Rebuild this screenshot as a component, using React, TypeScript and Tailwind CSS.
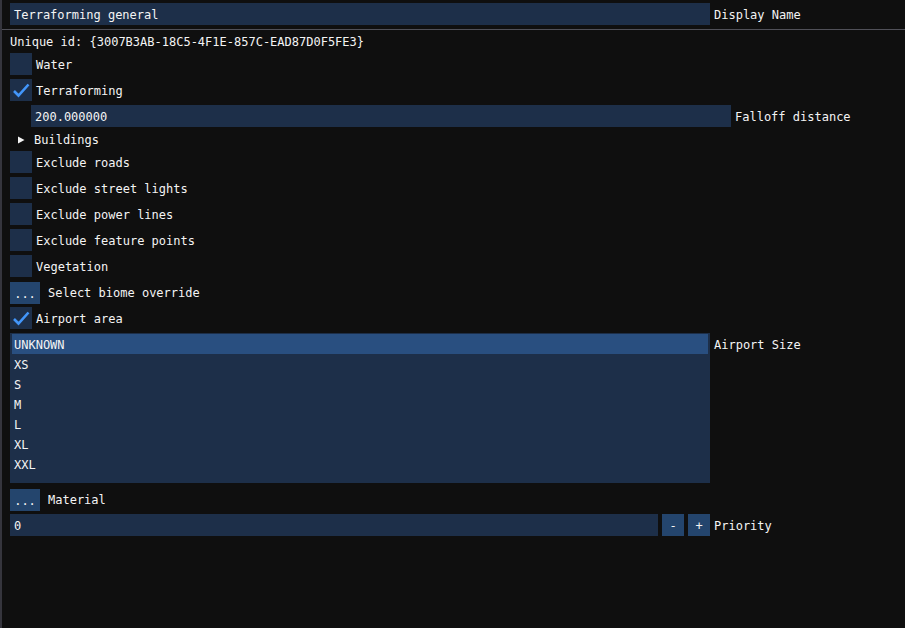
import React from "react";

const font = { fontFamily: '"DejaVu Sans Mono", "Liberation Mono", monospace' };

function Check() {
  return (
    <svg width="22" height="22" viewBox="0 0 22 22">
      <polyline points="4,12 8.5,16.5 18.5,5.5" fill="none" stroke="#4296fa" strokeWidth="2.6" strokeLinejoin="miter" strokeLinecap="butt" />
    </svg>
  );
}

function Checkbox({ label, checked }: { label: string; checked?: boolean }) {
  return (
    <div className="flex h-[22px] items-center">
      <div className="flex h-[22px] w-[22px] items-center justify-center bg-[#1d2f49]">{checked && <Check />}</div>
      <span className="ml-[4px] pt-[2px]">{label}</span>
    </div>
  );
}

function DotsButton({ label }: { label: string }) {
  return (
    <div className="flex h-[22px] items-center pt-[2px]">
      <div className="flex h-[22px] w-[30px] items-center justify-center bg-[#24456d] pt-[2px]">...</div>
      <span className="ml-[8px]">{label}</span>
    </div>
  );
}

export default function App() {
  const sizes = ["UNKNOWN", "XS", "S", "M", "L", "XL", "XXL"];
  return (
    <div
      style={font}
      className="flex h-[628px] w-[905px] flex-col overflow-hidden border-l-[2px] border-[#35353d] bg-[#0f0f0f] pt-[3px] text-[12px] leading-[14px] text-[#f4f4f4]"
    >
      <div className="flex h-[22px] items-center pl-[8px]">
        <div className="flex h-[22px] w-[700px] items-center bg-[#1d2f49] pl-[4px] pt-[2px]">Terraforming general</div>
        <span className="ml-[4px] pt-[2px]">Display Name</span>
      </div>
      <div className="mt-[4px] h-[1px] bg-[#505058]" />
      <div className="mt-[3px] flex flex-col gap-[4px] pl-[8px]">
        <div className="flex h-[16px] items-center pt-[2px]">Unique id: {"{3007B3AB-18C5-4F1E-857C-EAD87D0F5FE3}"}</div>
        <Checkbox label="Water" />
        <Checkbox label="Terraforming" checked />
        <div className="flex h-[22px] items-center pl-[21px]">
          <div className="flex h-[22px] w-[700px] items-center bg-[#1d2f49] pl-[4px] pt-[2px]">200.000000</div>
          <span className="ml-[4px] pt-[2px]">Falloff distance</span>
        </div>
        <div className="flex h-[16px] items-center">
          <svg width="24" height="16" viewBox="0 0 24 16" className="shrink-0">
            <polygon points="8,5.5 14.5,9 8,12.5" fill="#f4f4f4" />
          </svg>
          <span className="pt-[2px]">Buildings</span>
        </div>
        <Checkbox label="Exclude roads" />
        <Checkbox label="Exclude street lights" />
        <Checkbox label="Exclude power lines" />
        <Checkbox label="Exclude feature points" />
        <Checkbox label="Vegetation" />
        <DotsButton label="Select biome override" />
        <Checkbox label="Airport area" checked />
        <div className="flex items-start">
          <div className="flex h-[150px] w-[700px] flex-col bg-[#1d2f49] px-[2px] pt-[1px]">
            {sizes.map((s, i) => (
              <div key={s} className={"flex h-[20px] items-center pl-[2px] pt-[2px] " + (i === 0 ? "bg-[#294f80]" : "")}>
                {s}
              </div>
            ))}
          </div>
          <span className="ml-[4px] flex h-[22px] items-center pt-[2px]">Airport Size</span>
        </div>
        <div className="mt-[1px]">
          <DotsButton label="Material" />
        </div>
        <div className="flex h-[22px] items-center">
          <div className="flex h-[22px] w-[648px] items-center bg-[#1d2f49] pl-[4px] pt-[2px]">0</div>
          <div className="ml-[4px] flex h-[22px] w-[22px] items-center justify-center bg-[#24456d] pt-[2px]">-</div>
          <div className="ml-[4px] flex h-[22px] w-[22px] items-center justify-center bg-[#24456d] pt-[2px]">+</div>
          <span className="ml-[4px] pt-[2px]">Priority</span>
        </div>
      </div>
    </div>
  );
}
